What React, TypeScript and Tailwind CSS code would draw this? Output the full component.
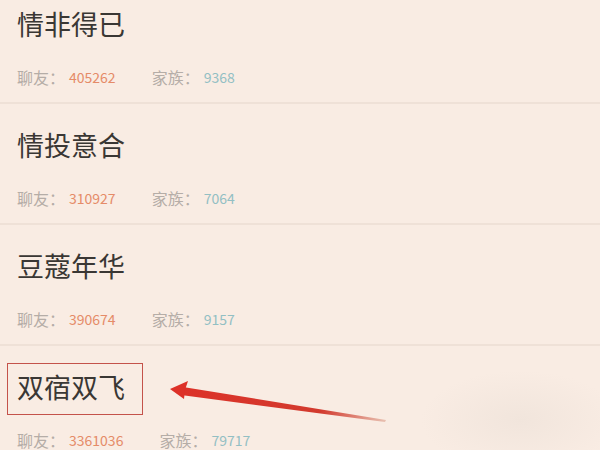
const rows = [
  { name: "情非得已", chat: "405262", clan: "9368" },
  { name: "情投意合", chat: "310927", clan: "7064" },
  { name: "豆蔻年华", chat: "390674", clan: "9157" },
  { name: "双宿双飞", chat: "3361036", clan: "79717", marked: true },
];

const Row = ({
  name,
  chat,
  clan,
  marked,
}: {
  name: string;
  chat: string;
  clan: string;
  marked?: boolean;
}) => {
  return (
    <div className="relative border-b-2 border-[#efe1d7] pl-[17px] pt-[23px] pb-[15px]">
      <div className="relative h-[36px] text-[27px] leading-[36px] text-[#3a3734]">
        {name}
        {marked && (
          <span className="absolute -left-[10px] -top-[6px] h-[52px] w-[136px] border-[1.5px] border-[#c4524a]" />
        )}
      </div>
      <div className="mt-[25px] flex h-[20px] items-center leading-[20px]">
        <span className="mr-[4px] text-[16px] text-[#b5ada7]">聊友：</span>
        <span className="text-[14px] text-[#e58b68]">{chat}</span>
        <span className="ml-[36px] mr-[4px] text-[16px] text-[#b5ada7]">家族：</span>
        <span className="text-[14px] text-[#93bfc3]">{clan}</span>
      </div>
    </div>
  );
};

export default function App() {
  return (
    <div
      className="relative h-[450px] w-[600px] overflow-hidden bg-[#f9ece3]"
      style={{ fontFamily: '"Noto Sans CJK SC", "Noto Sans", sans-serif' }}
    >
      <div className="-mt-[17px]">
        {rows.map((r) => (
          <Row key={r.name} {...r} />
        ))}
      </div>
      <div className="pointer-events-none absolute -bottom-[20px] -right-[20px] h-[100px] w-[200px] bg-[radial-gradient(ellipse_at_center,#f1e5dc_0%,transparent_70%)]" />
      <svg
        className="absolute left-0 top-0"
        width="600"
        height="450"
        viewBox="0 0 600 450"
      >
        <defs>
          <linearGradient id="tail" x1="170" y1="389" x2="385" y2="421" gradientUnits="userSpaceOnUse">
            <stop offset="0" stopColor="#dd3128" />
            <stop offset="0.7" stopColor="#d23a2e" />
            <stop offset="1" stopColor="#e8c0b0" />
          </linearGradient>
        </defs>
        <path d="M183 387 L386 420 L385 422 L181 395 Z" fill="url(#tail)" />
        <path d="M170 389 L188 381 L185 390 L184 399 Z" fill="#dd3128" />
      </svg>
    </div>
  );
}
